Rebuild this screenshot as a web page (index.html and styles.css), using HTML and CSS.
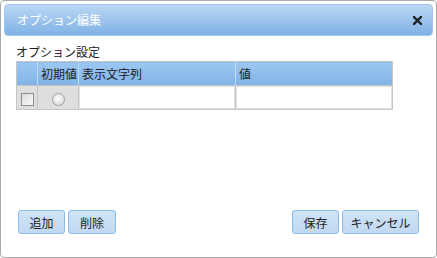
FILE: index.html
```html
<!DOCTYPE html>
<html lang="ja">
<head>
    <meta charset="UTF-8">
    <title>オプション編集</title>
    <link rel="stylesheet" href="styles.css">
</head>
<body>
    <div class="dialog">
        <div class="titlebar">
            <span class="title">オプション編集</span>
            <svg class="close" width="9" height="9" viewBox="0 0 9 9">
                <path d="M1 1 L8 8 M8 1 L1 8" stroke="#222" stroke-width="2.4" stroke-linecap="square"/>
            </svg>
        </div>

        <div class="content">
            <div class="label">オプション設定</div>
            <table class="options">
                <colgroup>
                    <col class="col-check">
                    <col class="col-default">
                    <col class="col-text">
                    <col>
                </colgroup>
                <tr class="head">
                    <th></th>
                    <th>初期値</th>
                    <th>表示文字列</th>
                    <th>値</th>
                </tr>
                <tr class="row">
                    <td class="gray center"><span class="checkbox"></span></td>
                    <td class="gray center"><span class="radio"></span></td>
                    <td class="input-cell"><div class="input"></div></td>
                    <td class="input-cell"><div class="input"></div></td>
                </tr>
            </table>
        </div>

        <div class="footer">
            <div class="group">
                <button class="btn w47">追加</button>
                <button class="btn w48">削除</button>
            </div>
            <div class="group">
                <button class="btn w47">保存</button>
                <button class="btn w77">キャンセル</button>
            </div>
        </div>
    </div>
</body>
</html>
```

FILE: styles.css
```css
body {
    margin: 0;
    padding: 0;
    font-family: "Noto Sans CJK JP", "DejaVu Sans", sans-serif;
    font-size: 12px;
    color: #222;
    background: #fff;
}

.dialog {
    width: 437px;
    height: 258px;
    box-sizing: border-box;
    border: 1px solid #a9a9a9;
    border-radius: 4px;
    padding: 3px;
    display: flex;
    flex-direction: column;
    background: #fff;
}

.titlebar {
    height: 32px;
    box-sizing: border-box;
    border: 1px solid #a4c6ea;
    border-radius: 4px;
    background: linear-gradient(#bad7f3, #7fb1e6);
    display: flex;
    align-items: center;
    justify-content: space-between;
    padding: 0 10px 0 12px;
    color: #fff;
}

.title {
    font-size: 12px;
    line-height: 16px;
}

.close {
    display: block;
}

.content {
    flex: 1;
    padding: 7px 12px 0;
}

.label {
    line-height: 18px;
    height: 18px;
}

.options {
    border-collapse: collapse;
    width: 377px;
    table-layout: fixed;
    border: 1px solid #c6c6c6;
}

.col-check { width: 21px; }
.col-default { width: 41px; }
.col-text { width: 157px; }

.options th {
    height: 23px;
    padding: 0;
    text-indent: 3px;
    text-align: left;
    font-weight: normal;
    background: linear-gradient(#9cc7f2, #80b3e7);
    border-left: 1px solid #c4d8ee;
    border-bottom: 1px solid #c6c6c6;
    color: #222;
    white-space: nowrap;
    overflow: hidden;
}

.options th:first-child {
    border-left: none;
}

.options td {
    height: 23px;
    padding: 0;
    border-left: 1px solid #c6c6c6;
}

.options td.gray {
    background: #dddfde;
}

.options td.center {
    text-align: center;
}

.checkbox {
    display: inline-block;
    width: 11px;
    height: 11px;
    border: 1px solid #8e8e8e;
    background: linear-gradient(135deg, #dcdcdc, #fafafa);
    vertical-align: middle;
}

.radio {
    display: inline-block;
    width: 11px;
    height: 11px;
    border: 1px solid #a0a0a0;
    border-radius: 50%;
    background: radial-gradient(circle at 45% 40%, #ffffff, #d0d0d0);
    vertical-align: middle;
}

.input-cell {
    background: #fff;
}

.input {
    height: 21px;
    border: 1px solid #e2e2e2;
    background: #fff;
}

.footer {
    display: flex;
    justify-content: space-between;
    padding: 0 14px 20px;
}

.group {
    display: flex;
    gap: 3px;
}

.btn {
    height: 24px;
    padding: 0;
    font-family: inherit;
    font-size: 12px;
    color: #222;
    border: 1px solid #8dbbea;
    border-radius: 3px;
    background: linear-gradient(#cfe3f6, #c0d9f2);
    cursor: pointer;
}

.w47 { width: 47px; }
.w48 { width: 48px; }
.w77 { width: 77px; }
```
